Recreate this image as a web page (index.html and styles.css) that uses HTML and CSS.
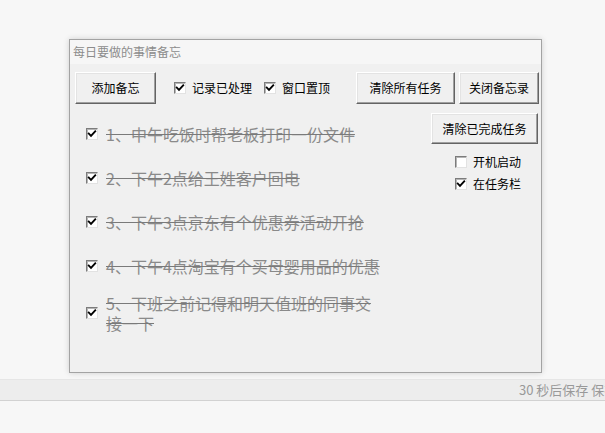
FILE: index.html
```html
<!DOCTYPE html>
<html lang="zh-CN">
<head>
<meta charset="utf-8">
<title>每日要做的事情备忘</title>
<link rel="stylesheet" href="styles.css">
</head>
<body>
<div class="window">
  <div class="titlebar">每日要做的事情备忘</div>
  <div class="client">
    <div class="toolbar">
      <button class="btn btn-add">添加备忘</button>
      <label class="check check-log"><span class="box"><svg viewBox="0 0 10 10"><path d="M1.8 4.6 L4 6.8 L8.2 2.4"/></svg></span>记录已处理</label>
      <label class="check check-top"><span class="box"><svg viewBox="0 0 10 10"><path d="M1.8 4.6 L4 6.8 L8.2 2.4"/></svg></span>窗口置顶</label>
      <div class="toolbar-right">
        <button class="btn btn-clear-all">清除所有任务</button>
        <button class="btn btn-close">关闭备忘录</button>
      </div>
    </div>
    <div class="main">
      <ul class="tasks">
        <li class="task"><span class="box"><svg viewBox="0 0 10 10"><path d="M1.8 4.6 L4 6.8 L8.2 2.4"/></svg></span><span class="task-text">1、中午吃饭时帮老板打印一份文件</span></li>
        <li class="task"><span class="box"><svg viewBox="0 0 10 10"><path d="M1.8 4.6 L4 6.8 L8.2 2.4"/></svg></span><span class="task-text">2、下午2点给王姓客户回电</span></li>
        <li class="task"><span class="box"><svg viewBox="0 0 10 10"><path d="M1.8 4.6 L4 6.8 L8.2 2.4"/></svg></span><span class="task-text">3、下午3点京东有个优惠券活动开抢</span></li>
        <li class="task"><span class="box"><svg viewBox="0 0 10 10"><path d="M1.8 4.6 L4 6.8 L8.2 2.4"/></svg></span><span class="task-text">4、下午4点淘宝有个买母婴用品的优惠</span></li>
        <li class="task task-long"><span class="box"><svg viewBox="0 0 10 10"><path d="M1.8 4.6 L4 6.8 L8.2 2.4"/></svg></span><span class="task-text">5、下班之前记得和明天值班的同事交接一下</span></li>
      </ul>
      <div class="side">
        <button class="btn btn-clear-done">清除已完成任务</button>
        <label class="check side-check"><span class="box box-empty"></span>开机启动</label>
        <label class="check side-check"><span class="box"><svg viewBox="0 0 10 10"><path d="M1.8 4.6 L4 6.8 L8.2 2.4"/></svg></span>在任务栏</label>
      </div>
    </div>
  </div>
</div>
<div class="statusbar">30 秒后保存 保存中</div>
</body>
</html>
```

FILE: styles.css
```css
* { box-sizing: border-box; }

html, body {
  margin: 0;
  padding: 0;
  background: #f7f7f7;
  height: 433px;
  overflow: hidden;
  font-family: "Noto Sans CJK SC", "Microsoft YaHei", "Noto Sans", sans-serif;
}

.window {
  margin: 39px 0 0 69px;
  width: 473px;
  height: 334px;
  border: 1px solid #a3a3a3;
  background: #f0f0f0;
  box-shadow: 0 0 6px rgba(0, 0, 0, 0.16);
  display: flex;
  flex-direction: column;
}

.titlebar {
  height: 24px;
  line-height: 23px;
  padding-left: 3px;
  background: #f6f6f6;
  color: #8c8c8c;
  font-size: 12px;
}

.client {
  flex: 1;
  padding: 8px 2px 0 5px;
  background: #f0f0f0;
}

.toolbar {
  display: flex;
  align-items: center;
  height: 32px;
}

.toolbar-right {
  margin-left: auto;
  display: flex;
  gap: 4px;
}

.btn {
  font-family: inherit;
  font-size: 12px;
  line-height: 16px;
  color: #000;
  background: #f0f0f0;
  border: 1px solid;
  border-color: #ffffff #646464 #646464 #ffffff;
  box-shadow: inset -1px -1px 0 #a0a0a0, inset 1px 1px 0 #e3e3e3;
  padding: 0;
  height: 32px;
  border-radius: 0;
}

.btn-add { width: 81px; }
.btn-clear-all { width: 99px; }
.btn-close { width: 80px; }
.btn-clear-done { width: 107px; height: 31px; }

.check {
  display: flex;
  align-items: center;
  gap: 6px;
  font-size: 12px;
  line-height: 16px;
  color: #000;
}

.check-log { margin-left: 18px; }
.check-top { margin-left: 12px; }

.box {
  flex: none;
  width: 12px;
  height: 12px;
  border: 1px solid;
  border-color: #7c7c7c #e2e2e2 #e2e2e2 #7c7c7c;
  box-shadow: inset 1px 1px 0 #b5b5b5;
  background: #ffffff;
  display: flex;
  align-items: center;
  justify-content: center;
}

.box svg {
  width: 10px;
  height: 10px;
  display: block;
}

.box svg path {
  fill: none;
  stroke: #000;
  stroke-width: 1.9;
  stroke-linecap: square;
}

.main {
  display: flex;
  justify-content: space-between;
  margin-top: 8px;
}

.tasks {
  list-style: none;
  margin: 0;
  padding: 0 0 0 11px;
}

.task {
  height: 44px;
  display: flex;
  align-items: center;
  gap: 8px;
}

.task-long { height: 49px; }

.task-text {
  max-width: 277px;
  font-size: 16px;
  line-height: 20px;
  color: #8a8a8a;
  text-decoration: line-through;
  text-decoration-color: #7a7a7a;
}

.side {
  margin-top: 1px;
  margin-right: 1px;
  display: flex;
  flex-direction: column;
}

.side-check {
  height: 22px;
  padding-left: 24px;
}

.btn-clear-done + .side-check { margin-top: 7px; }

.statusbar {
  margin-top: 6px;
  height: 22px;
  line-height: 20px;
  padding-left: 519px;
  background: #ededed;
  border-top: 1px solid #e6e6e6;
  border-bottom: 1px solid #d2d2d2;
  color: #999999;
  font-size: 13px;
  white-space: nowrap;
  overflow: hidden;
}
```
